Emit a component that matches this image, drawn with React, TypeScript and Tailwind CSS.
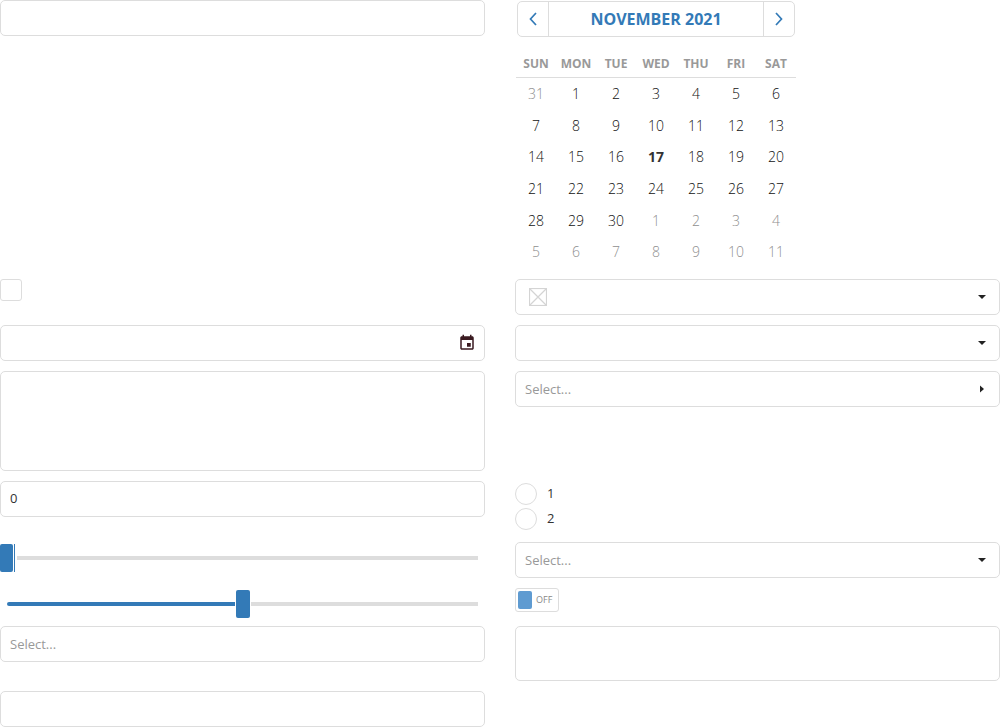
import React from 'react';

const font = { fontFamily: '"Open Sans", sans-serif' };

const weeks = [
  [31, 1, 2, 3, 4, 5, 6],
  [7, 8, 9, 10, 11, 12, 13],
  [14, 15, 16, 17, 18, 19, 20],
  [21, 22, 23, 24, 25, 26, 27],
  [28, 29, 30, 1, 2, 3, 4],
  [5, 6, 7, 8, 9, 10, 11],
];

const Caret = ({ right }: { right?: boolean }) => (
  <svg width="8" height="8" viewBox="0 0 8 8" className="text-[#222]">
    {right ? <path d="M2 0.5 L6 4 L2 7.5 Z" fill="currentColor" /> : <path d="M0 2 L8 2 L4 6 Z" fill="currentColor" />}
  </svg>
);

const Box = ({ className = '', children }: { className?: string; children?: React.ReactNode }) => (
  <div className={`flex items-center justify-between border border-[#dddddd] rounded-[5px] bg-white px-[9px] text-[13px] ${className}`}>
    {children}
  </div>
);

const Placeholder = () => <span className="pt-[2px] text-[#999999]">Select...</span>;

const Calendar = () => (
  <div className="ml-px w-[280px] h-[279px]">
    <div className="ml-px mt-px flex h-[36px] w-[278px] items-center border border-[#dddddd] rounded-[5px] text-[#337ab7]">
      <div className="flex h-full w-[31px] items-center justify-center border-r border-[#dddddd]">
        <svg width="10" height="14" viewBox="0 0 10 14" fill="none" stroke="currentColor" strokeWidth="1.7">
          <path d="M8 1 L2.5 7 L8 13" />
        </svg>
      </div>
      <div className="flex-1 text-center text-[16px] font-bold">NOVEMBER 2021</div>
      <div className="flex h-full w-[31px] items-center justify-center border-l border-[#dddddd]">
        <svg width="10" height="14" viewBox="0 0 10 14" fill="none" stroke="currentColor" strokeWidth="1.7">
          <path d="M2 1 L7.5 7 L2 13" />
        </svg>
      </div>
    </div>
    <div className="mt-[13px] grid h-[28px] grid-cols-7 border-b border-[#dddddd] text-[12px] font-bold text-[#999999]">
      {['SUN', 'MON', 'TUE', 'WED', 'THU', 'FRI', 'SAT'].map((d) => (
        <div key={d} className="text-center leading-[28px]">{d}</div>
      ))}
    </div>
    <div className="grid grid-cols-7 text-[14px] font-light text-[#111111]">
      {weeks.map((week, w) =>
        week.map((day, i) => {
          const muted = (w === 0 && day > 20) || (w >= 4 && day < 15 && (w === 5 || day < 10));
          const today = w === 2 && day === 17;
          return (
            <div
              key={`${w}-${i}`}
              className={`h-[31.7px] text-center leading-[31.7px] ${muted ? 'text-[#8f8f8f]' : ''} ${today ? 'font-bold text-[#333333]' : ''}`}
            >
              {day}
            </div>
          );
        }),
      )}
    </div>
  </div>
);

const Slider = ({ percent }: { percent: number }) =>
  percent === 0 ? (
    <div className="flex h-[28px] items-center">
      <div className="h-[28px] w-[13px] rounded-[2px] bg-[#337ab7]" />
      <div className="ml-px h-[28px] w-px bg-[#337ab7]" />
      <div className="ml-[2px] h-[4px] w-[461px] bg-[#dddddd]" />
    </div>
  ) : (
    <div className="flex h-[28px] items-center pl-[7px]">
      <div className="h-[4px] w-[228px] rounded-l-[2px] bg-[#337ab7]" />
      <div className="ml-px h-[28px] w-[14px] rounded-[2px] bg-[#337ab7]" />
      <div className="ml-px h-[4px] w-[227px] bg-[#dddddd]" />
    </div>
  );

export default function App() {
  return (
    <div style={font} className="flex h-[727px] w-[1000px] gap-[30px] overflow-hidden bg-white text-[#333333]">
      <div className="flex w-[485px] flex-col">
        <Box className="h-[36px]" />
        <div className="mt-[243px] h-[22px] w-[22px] rounded-[3px] border border-[#dddddd]" />
        <Box className="mt-[24px] h-[36px]">
          <span />
          <svg width="18" height="18" viewBox="0 0 24 24" className="mr-[-1px] text-[#3a1a20]">
            <path
              fill="currentColor"
              d="M17 12h-5v5h5v-5zM16 1v2H8V1H6v2H5c-1.11 0-2 .9-2 2v14c0 1.1.89 2 2 2h14c1.1 0 2-.9 2-2V5c0-1.1-.9-2-2-2h-1V1h-2zm3 18H5V8h14v11z"
            />
          </svg>
        </Box>
        <Box className="mt-[10px] h-[100px]" />
        <Box className="mt-[10px] h-[36px]">0</Box>
        <div className="mt-[27px]">
          <Slider percent={0} />
        </div>
        <div className="mt-[18px]">
          <Slider percent={50} />
        </div>
        <Box className="mt-[8px] h-[36px]"><Placeholder /></Box>
        <Box className="mt-[29px] h-[36px]" />
      </div>

      <div className="flex w-[485px] flex-col">
        <Calendar />
        <Box className="h-[36px] pl-[13px] pr-[13px]">
          <svg width="18" height="18" viewBox="0 0 18 18" fill="none" stroke="#d4d4d4" strokeWidth="1.2">
            <rect x="0.5" y="0.5" width="17" height="17" />
            <path d="M0.5 0.5 L17.5 17.5 M17.5 0.5 L0.5 17.5" />
          </svg>
          <Caret />
        </Box>
        <Box className="mt-[10px] h-[36px] pr-[13px]">
          <span />
          <Caret />
        </Box>
        <Box className="mt-[10px] h-[36px] pr-[13px]">
          <Placeholder />
          <Caret right />
        </Box>
        <div className="mt-[76px] flex flex-col gap-[3px] text-[13px]">
          <div className="flex h-[22px] items-center gap-[10px]">
            <div className="h-[22px] w-[22px] rounded-full border border-[#dddddd]" />
            1
          </div>
          <div className="flex h-[22px] items-center gap-[10px]">
            <div className="h-[22px] w-[22px] rounded-full border border-[#dddddd]" />
            2
          </div>
        </div>
        <Box className="mt-[12px] h-[36px] pr-[13px]">
          <Placeholder />
          <Caret />
        </Box>
        <div className="mt-[10px] flex h-[24px] w-[44px] items-center gap-[4px] rounded-[3px] border border-[#dddddd] pl-[2px]">
          <div className="h-[18px] w-[14px] rounded-[2px] bg-[#5f9bd1]" />
          <span className="text-[9px] text-[#888888]">OFF</span>
        </div>
        <Box className="mt-[14px] h-[55px]" />
      </div>
    </div>
  );
}
